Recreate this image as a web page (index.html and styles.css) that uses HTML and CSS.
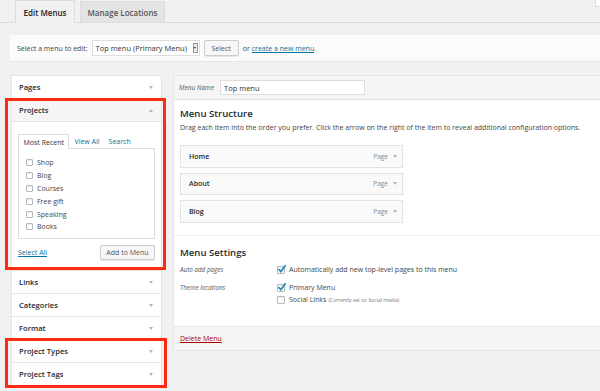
FILE: index.html
```html
<!DOCTYPE html>
<html>
<head>
<meta charset="utf-8">
<link rel="stylesheet" href="styles.css">
</head>
<body>
<div class="tabs">
  <div class="tab active">Edit Menus</div>
  <div class="tab">Manage Locations</div>
  <div class="screen-opt"></div>
</div>
<div class="select-bar">
  <span>Select a menu to edit:</span>
  <div class="dropdown"><span>Top menu (Primary Menu)</span><span class="dd-arrow"><span class="tri-dark"></span></span></div>
  <div class="btn">Select</div>
  <span>or <a class="link">create a new menu</a>.</span>
</div>
<div class="columns">
  <div class="side">
    <div class="acc"><div class="acc-head">Pages<span class="tri"></span></div></div>
    <div class="acc open hl hl-projects">
      <div class="acc-head">Projects<span class="tri up"></span></div>
      <div class="acc-body">
        <div class="ptabs">
          <span class="ptab active">Most Recent</span>
          <span class="ptab view">View All</span>
          <span class="ptab search">Search</span>
        </div>
        <div class="panel">
          <div class="item"><span class="cb"></span>Shop</div>
          <div class="item"><span class="cb"></span>Blog</div>
          <div class="item"><span class="cb"></span>Courses</div>
          <div class="item"><span class="cb"></span>Free gift</div>
          <div class="item"><span class="cb"></span>Speaking</div>
          <div class="item"><span class="cb"></span>Books</div>
        </div>
        <div class="acc-foot">
          <a class="link">Select All</a>
          <div class="btn add">Add to Menu</div>
        </div>
      </div>
    </div>
    <div class="acc"><div class="acc-head">Links<span class="tri"></span></div></div>
    <div class="acc"><div class="acc-head">Categories<span class="tri"></span></div></div>
    <div class="acc"><div class="acc-head">Format<span class="tri"></span></div></div>
    <div class="hl hl-group">
      <div class="acc"><div class="acc-head">Project Types<span class="tri"></span></div></div>
      <div class="acc"><div class="acc-head">Project Tags<span class="tri"></span></div></div>
    </div>
  </div>
  <div class="main">
    <div class="main-head">
      <span class="menu-name-label">Menu Name</span>
      <div class="input">Top menu</div>
    </div>
    <div class="main-body">
      <div class="structure">
        <h3 class="h">Menu Structure</h3>
        <p class="desc">Drag each item into the order you prefer. Click the arrow on the right of the item to reveal additional configuration options.</p>
        <div class="mitem"><span class="mtitle">Home</span><span class="mtype">Page<span class="tri"></span></span></div>
        <div class="mitem"><span class="mtitle">About</span><span class="mtype">Page<span class="tri"></span></span></div>
        <div class="mitem"><span class="mtitle">Blog</span><span class="mtype">Page<span class="tri"></span></span></div>
      </div>
      <div class="settings">
        <h3 class="h">Menu Settings</h3>
        <div class="srow">
          <span class="slabel">Auto add pages</span>
          <div class="sopts">
            <div class="opt"><span class="cb checked"><svg viewBox="0 0 10 10" width="10" height="10"><path d="M1.6 5.2 L3.9 7.6 L8.6 1.2" fill="none" stroke="#1e8cbe" stroke-width="1.7"/></svg></span>Automatically add new top-level pages to this menu</div>
          </div>
        </div>
        <div class="srow">
          <span class="slabel">Theme locations</span>
          <div class="sopts">
            <div class="opt"><span class="cb checked"><svg viewBox="0 0 10 10" width="10" height="10"><path d="M1.6 5.2 L3.9 7.6 L8.6 1.2" fill="none" stroke="#1e8cbe" stroke-width="1.7"/></svg></span>Primary Menu</div>
            <div class="opt"><span class="cb"></span>Social Links <span class="small">(Currently set to: Social media)</span></div>
          </div>
        </div>
      </div>
    </div>
    <div class="main-foot"><a class="delete">Delete Menu</a></div>
  </div>
</div>
</body>
</html>
```
FILE: styles.css
```css
* { box-sizing: border-box; }
html, body { margin: 0; }
body {
  background: #f1f1f1;
  font-family: "Open Sans", "Liberation Sans", sans-serif;
  font-size: 7px;
  color: #444;
  height: 391px;
  overflow: hidden;
}
.link { color: #0074a2; text-decoration: underline; }

/* tabs */
.tabs {
  display: flex;
  align-items: flex-end;
  height: 23px;
  padding-left: 15px;
  border-bottom: 1px solid #dcdcdc;
  gap: 5px;
}
.tab {
  height: 21px;
  padding: 0 6.5px;
  display: flex;
  align-items: center;
  font-size: 8px;
  font-weight: 600;
  color: #555;
  background: #e4e4e4;
  border: 1px solid #dcdcdc;
  border-bottom: none;
}
.tab.active {
  background: #f1f1f1;
  color: #222;
  height: 23px;
  margin-bottom: -1px;
  padding: 0 7.5px;
}
.screen-opt {
  margin-left: auto;
  align-self: flex-start;
  width: 5px;
  height: 7px;
  background: #fff;
  border: 1px solid #ddd;
  border-top: 0;
  border-right: 0;
}

/* select bar */
.select-bar {
  margin: 12px 0 0 10px;
  height: 27px;
  background: #fbfbfb;
  border-bottom: 1px solid #e6e6e6;
  display: flex;
  align-items: center;
  padding-left: 7px;
  gap: 4px;
  color: #444;
}
.dropdown {
  width: 108px;
  height: 16px;
  background: #fff;
  border: 1px solid #ddd;
  display: flex;
  align-items: center;
  justify-content: space-between;
  padding: 0 1px 0 3px;
  font-size: 7.5px;
  color: #333;
}
.dd-arrow {
  width: 5px;
  height: 10px;
  border: 1px solid #999;
  background: #eee;
  display: flex;
  align-items: center;
  justify-content: center;
}
.tri-dark {
  width: 0; height: 0;
  border-left: 1.5px solid transparent;
  border-right: 1.5px solid transparent;
  border-top: 2px solid #222;
}
.btn {
  height: 16px;
  padding: 0 7px;
  display: flex;
  align-items: center;
  background: #f7f7f7;
  border: 1px solid #ccc;
  border-radius: 2px;
  color: #555;
  box-shadow: 0 1px 0 #e8e8e8;
}

/* columns */
.columns {
  margin-top: 13px;
  display: flex;
  padding-left: 11px;
  gap: 11px;
}
.side {
  width: 151px;
  flex: none;
  display: flex;
  flex-direction: column;
}
.acc {
  background: #fff;
  border: 1px solid #e5e5e5;
  border-top: none;
}
.side > .acc:first-child { border-top: 1px solid #e5e5e5; }
.acc-head {
  height: 22px;
  display: flex;
  align-items: center;
  justify-content: space-between;
  padding: 0 8px 0 7px;
  font-size: 7.6px;
  font-weight: 600;
  color: #23282d;
}
.acc.open .acc-head {
  height: 23px;
  background: #f5f5f5;
  border-bottom: 1px solid #e5e5e5;
}
.tri {
  width: 0; height: 0;
  border-left: 2.2px solid transparent;
  border-right: 2.2px solid transparent;
  border-top: 3px solid #b4b4b4;
}
.tri.up {
  border-top: none;
  border-bottom: 3px solid #b4b4b4;
}
.acc-body {
  padding: 12px 6px 10px 6px;
}
.ptabs {
  display: flex;
  align-items: flex-end;
  height: 14px;
}
.ptab { color: #0074a2; }
.ptab.active {
  height: 15px;
  margin-bottom: -1px;
  padding: 0 4.5px;
  display: flex;
  align-items: center;
  border: 1px solid #ddd;
  border-bottom: none;
  background: #fff;
  color: #333;
  position: relative;
}
.ptab.view { margin-left: 5px; align-self: center; }
.ptab.search { margin-left: 9px; align-self: center; }
.panel {
  height: 91px;
  border: 1px solid #ddd;
  background: #fff;
  padding: 7.5px 7px 0 7px;
}
.item {
  height: 12.8px;
  display: flex;
  align-items: center;
  gap: 4px;
  color: #444;
}
.cb {
  width: 7px;
  height: 7px;
  border: 1px solid #b4b9be;
  border-radius: 1px;
  background: #fff;
  box-shadow: inset 0 1px 1px rgba(0,0,0,0.08);
  flex: none;
  position: relative;
}
.cb svg {
  position: absolute;
  left: -1px;
  top: -3px;
}
.acc-foot {
  margin-top: 6px;
  display: flex;
  align-items: center;
  justify-content: space-between;
}
.btn.add { height: 15px; padding: 0 5.5px; }

/* red highlights */
.hl { position: relative; }
.hl::after {
  content: "";
  position: absolute;
  pointer-events: none;
  border: 3px solid #fb2a12;
}
.hl-projects::after { top: -1px; bottom: 0; left: -7px; right: -5px; }
.hl-group::after { top: -2px; bottom: -2px; left: -6px; right: -5px; }

/* main */
.main {
  flex: 1;
  border: 1px solid #e5e5e5;
  border-right: none;
  align-self: flex-start;
  display: flex;
  flex-direction: column;
}
.main-head {
  height: 24px;
  background: #f5f5f5;
  border-bottom: 1px solid #e1e1e1;
  display: flex;
  align-items: center;
  padding-left: 5px;
  gap: 6px;
}
.menu-name-label {
  font-style: italic;
  font-size: 6.5px;
  color: #555;
}
.input {
  width: 145px;
  height: 15px;
  background: #fff;
  border: 1px solid #ddd;
  display: flex;
  align-items: center;
  padding-left: 3px;
  font-size: 7.5px;
  color: #333;
}
.main-body {
  background: #fff;
  height: 226px;
}
.structure { padding: 7px 6px 0 6px; }
.h {
  margin: 0;
  font-size: 9.6px;
  font-weight: 600;
  line-height: 14px;
  color: #23282d;
}
.desc {
  margin: 2px 0 12px 0;
  line-height: 10px;
  color: #444;
  white-space: nowrap;
}
.mitem {
  width: 223px;
  height: 22.5px;
  margin-bottom: 5px;
  border: 1px solid #e3e3e3;
  background: #fafafa;
  display: flex;
  align-items: center;
  justify-content: space-between;
  padding: 0 5px 0 8px;
}
.mtitle { font-weight: 600; color: #23282d; font-size: 7px; }
.mtype {
  display: flex;
  align-items: center;
  gap: 5px;
  color: #888;
  font-size: 6.5px;
}
.settings {
  margin-top: 12px;
  border-top: 1px solid #eee;
  padding: 10px 6px 0 6px;
}
.srow {
  display: flex;
  margin-top: 4px;
}
.srow + .srow { margin-top: 6px; }
.slabel {
  width: 97px;
  flex: none;
  font-style: italic;
  font-size: 6.3px;
  color: #555;
  line-height: 12px;
}
.sopts { display: flex; flex-direction: column; }
.opt {
  height: 12px;
  display: flex;
  align-items: center;
  gap: 4px;
  color: #444;
  white-space: nowrap;
}
.opt .cb { width: 8px; height: 8px; }
.small { font-size: 5px; color: #777; margin-left: -2px; }
.main-foot {
  height: 24px;
  background: #f5f5f5;
  border-top: 1px solid #e8e8e8;
  display: flex;
  align-items: center;
  padding-left: 6px;
}
.delete { color: #a00; text-decoration: underline; }
```
